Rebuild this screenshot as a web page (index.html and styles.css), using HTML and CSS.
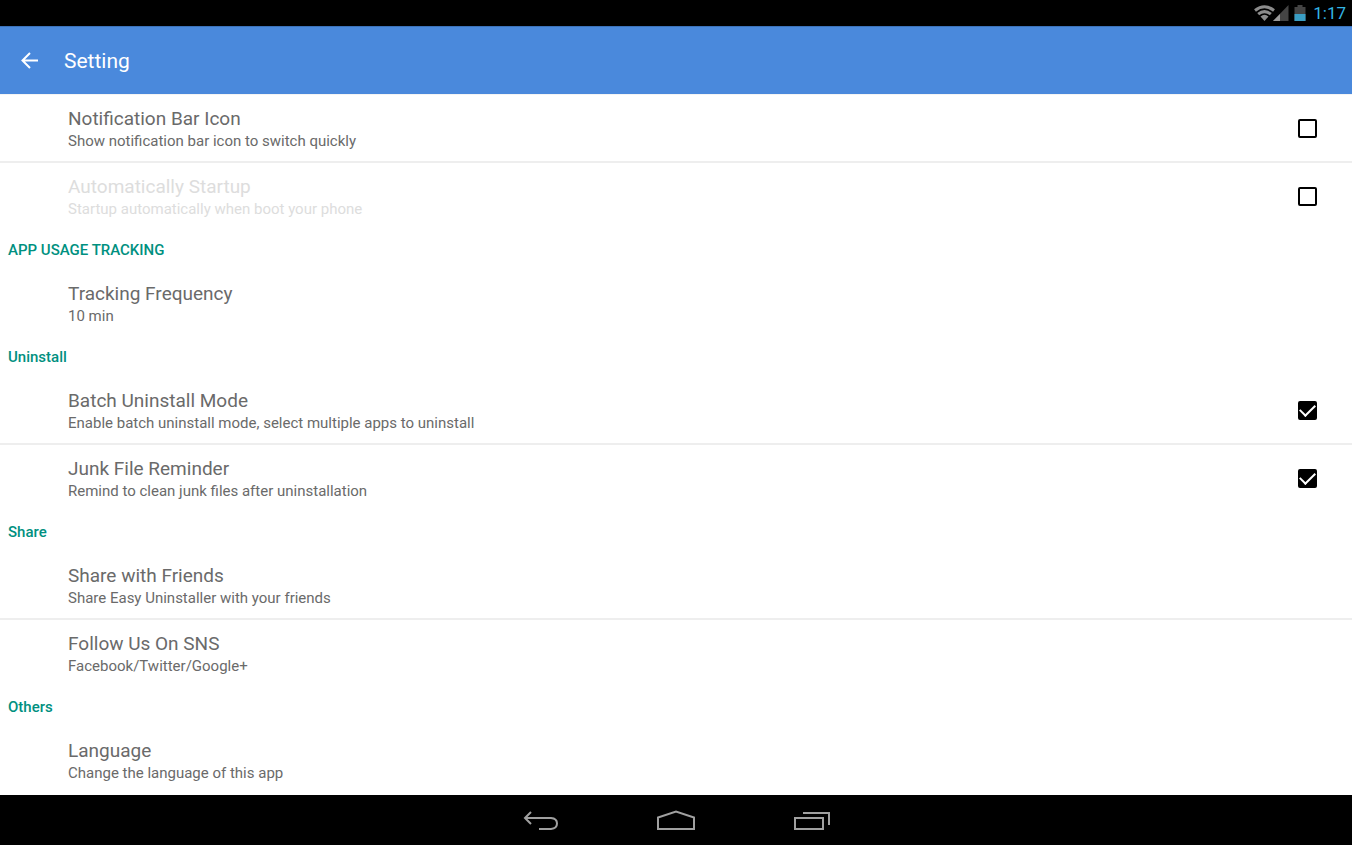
FILE: index.html
```html
<!DOCTYPE html>
<html lang="en">
<head>
<meta charset="UTF-8">
<meta name="viewport" content="width=device-width, initial-scale=1">
<title>Setting</title>
<link rel="stylesheet" href="styles.css">
</head>
<body>
  <div class="status-bar">
    <svg class="status-icons" width="54" height="18" viewBox="0 0 54 18" aria-hidden="true">
      <g fill="none" stroke="#8c8c8c" stroke-width="3">
        <path d="M2 6.500Q11.500 -1 21 6.500"/>
        <path d="M5.200 10.200Q11.500 5 17.800 10.200"/>
      </g>
      <path d="M7.500 12.500Q11.500 9 15.500 12.500L11.500 17z" fill="#8c8c8c"/>
      <path d="M35.500 1v16H20z" fill="#444"/>
      <path d="M27 10v7h-7z" fill="#999"/>
      <path d="M44.500 1h5v2h3v14h-11V3h3z" fill="#444"/>
      <path d="M41.500 10h11v7h-11z" fill="#3a9ec4"/>
    </svg>
    <span class="clock">1:17</span>
  </div>

  <header class="app-bar">
    <button class="back" type="button" aria-label="Back">
      <svg width="18" height="18" viewBox="0 0 18 18" fill="none" stroke="#fff" stroke-width="2">
        <path d="M17 8.500H2M9 1L1.500 8.500L9 16"/>
      </svg>
    </button>
    <h1>Setting</h1>
  </header>

  <main class="settings">
    <section>
      <label class="row">
        <span class="text">
          <span class="title">Notification Bar Icon</span>
          <span class="summary">Show notification bar icon to switch quickly</span>
        </span>
        <input class="check" type="checkbox">
      </label>
      <label class="row disabled">
        <span class="text">
          <span class="title">Automatically Startup</span>
          <span class="summary">Startup automatically when boot your phone</span>
        </span>
        <input class="check" type="checkbox" disabled>
      </label>
    </section>

    <section>
      <h2>APP USAGE TRACKING</h2>
      <button class="row" type="button">
        <span class="text">
          <span class="title">Tracking Frequency</span>
          <span class="summary">10 min</span>
        </span>
      </button>
    </section>

    <section>
      <h2>Uninstall</h2>
      <label class="row">
        <span class="text">
          <span class="title">Batch Uninstall Mode</span>
          <span class="summary">Enable batch uninstall mode, select multiple apps to uninstall</span>
        </span>
        <input class="check" type="checkbox" checked>
      </label>
      <label class="row">
        <span class="text">
          <span class="title">Junk File Reminder</span>
          <span class="summary">Remind to clean junk files after uninstallation</span>
        </span>
        <input class="check" type="checkbox" checked>
      </label>
    </section>

    <section>
      <h2>Share</h2>
      <button class="row" type="button">
        <span class="text">
          <span class="title">Share with Friends</span>
          <span class="summary">Share Easy Uninstaller with your friends</span>
        </span>
      </button>
      <button class="row" type="button">
        <span class="text">
          <span class="title">Follow Us On SNS</span>
          <span class="summary">Facebook/Twitter/Google+</span>
        </span>
      </button>
    </section>

    <section>
      <h2>Others</h2>
      <button class="row" type="button">
        <span class="text">
          <span class="title">Language</span>
          <span class="summary">Change the language of this app</span>
        </span>
      </button>
    </section>
  </main>

  <nav class="nav-bar" aria-label="System navigation">
    <button type="button" aria-label="Back">
      <svg width="38" height="22" viewBox="0 0 38 22">
        <path d="M10 2L4 8L10 14M4 8H30Q36 8.500 36 13.500Q36 18.500 30 19H18"/>
      </svg>
    </button>
    <button type="button" aria-label="Home">
      <svg width="38" height="22" viewBox="0 0 38 22">
        <path d="M1 19V7.500L19 1.500L37 7.500V19z"/>
      </svg>
    </button>
    <button type="button" aria-label="Recent apps">
      <svg width="38" height="22" viewBox="0 0 38 22">
        <path d="M2 8H30V19H2zM10 3H36V15"/>
      </svg>
    </button>
  </nav>
</body>
</html>
```

FILE: styles.css
```css
* {
  box-sizing: border-box;
}
body {
  margin: 0;
  height: 100vh;
  display: flex;
  flex-direction: column;
  background: #fff;
  color: #6a6a6a;
  font-family: Roboto, "Noto Sans", sans-serif;
}
button {
  margin: 0;
  padding: 0;
  border: none;
  background: none;
  color: inherit;
  font: inherit;
  cursor: pointer;
}
svg {
  display: block;
}

.status-bar {
  flex: none;
  display: flex;
  justify-content: flex-end;
  align-items: center;
  gap: 6px;
  height: 26px;
  padding: 0 6px;
  background: #000;
}
.clock {
  color: #33b5e5;
  font-size: 17px;
  line-height: 26px;
}

.app-bar {
  flex: none;
  display: flex;
  align-items: center;
  gap: 25px;
  height: 68px;
  padding: 0 21px;
  background: #4a89dc;
  border-top: 1px solid #3c72b8;
  color: #fff;
}
.app-bar h1 {
  margin: 0;
  font-size: 21px;
  font-weight: 400;
}

.settings {
  flex: 1;
  min-height: 0;
  overflow: hidden;
  border-top: 1px solid #f4f4f4;
}
.settings h2 {
  margin: 0;
  padding: 2px 8px 1px;
  color: #009080;
  font-size: 15px;
  font-weight: 500;
  line-height: 38px;
}
.row {
  display: flex;
  justify-content: space-between;
  align-items: center;
  width: 100%;
  padding: 0 35px 0 68px;
  text-align: left;
  cursor: pointer;
}
.row + .row {
  border-top: 2px solid #eee;
}
.text {
  display: flex;
  flex-direction: column;
  padding: 12px 0 9px;
}
.title {
  font-size: 19px;
  line-height: 24px;
}
.summary {
  font-size: 15px;
  line-height: 21px;
}
.disabled .text {
  color: #ddd;
}

.check {
  appearance: none;
  flex: none;
  display: grid;
  place-items: center;
  width: 19px;
  height: 19px;
  margin: 0;
  border: 2px solid #000;
  border-radius: 2px;
}
.check:checked {
  background: #000;
}
/* tick mark */
.check:checked::before {
  content: "";
  width: 13px;
  height: 7px;
  border: solid #fff;
  border-width: 0 0 2px 2px;
  transform: translateY(-2px) rotate(-45deg);
}

.nav-bar {
  flex: none;
  display: flex;
  justify-content: center;
  align-items: center;
  gap: 98px;
  height: 50px;
  padding-top: 2px;
  background: #000;
}
.nav-bar path {
  fill: none;
  stroke: #a0a0a0;
  stroke-width: 2;
}
```
